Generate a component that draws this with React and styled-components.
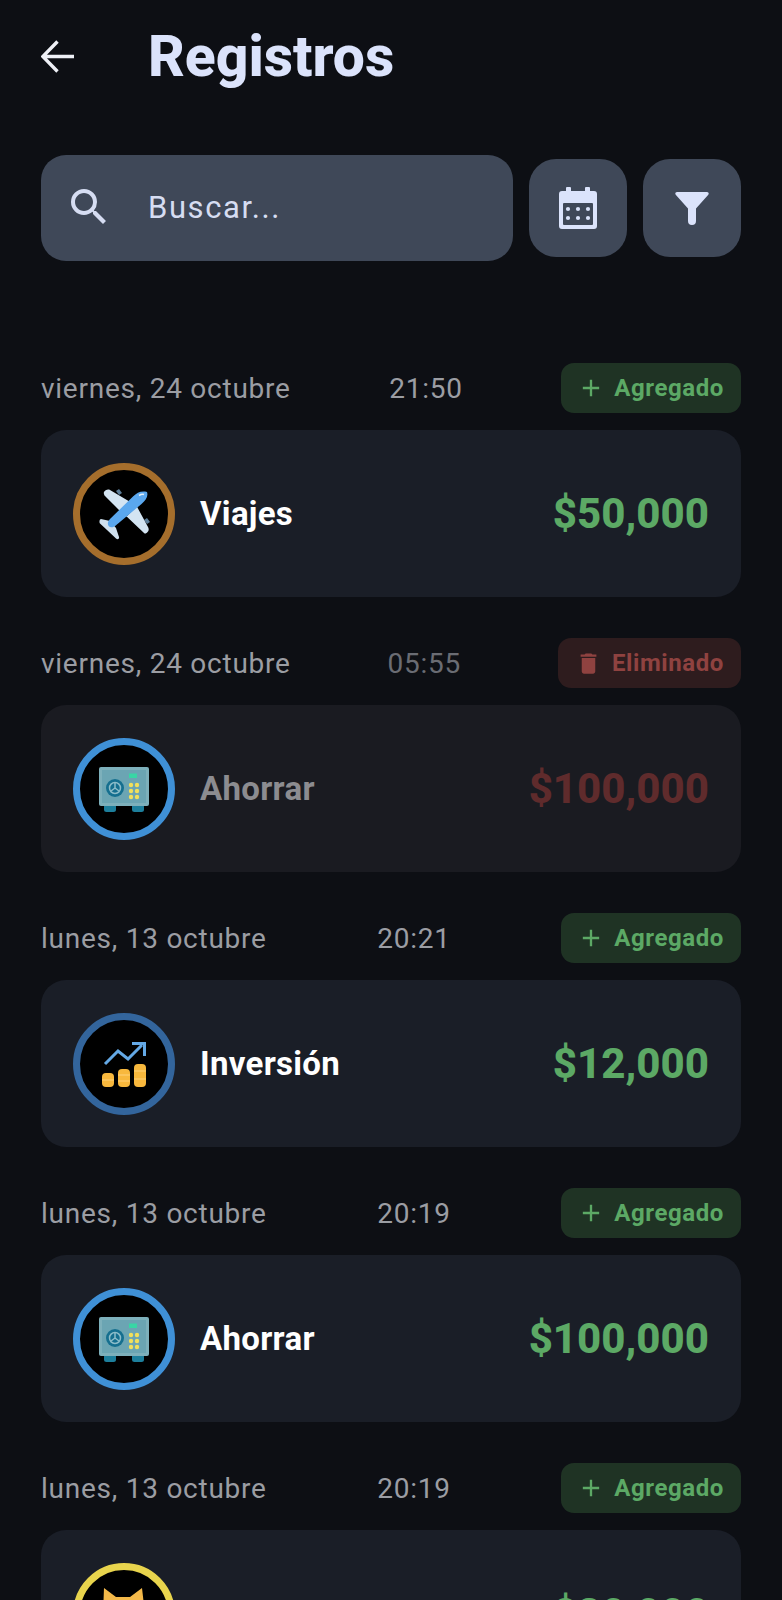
import React from 'react';
import styled, { createGlobalStyle } from 'styled-components';
import { MdAdd, MdDelete, MdSearch } from 'react-icons/md';

const GlobalStyle = createGlobalStyle`
  html, body {
    margin: 0;
    padding: 0;
    background: #0d0f14;
  }
  * {
    box-sizing: border-box;
  }
`;

const Page = styled.div`
  height: 1600px;
  overflow: hidden;
  padding: 0 41px;
  background: #0d0f14;
  font-family: Roboto, "Liberation Sans", sans-serif;
`;

const Header = styled.header`
  display: flex;
  align-items: center;
  height: 112px;
`;

const BackButton = styled.div`
  display: flex;
  width: 107px;
  color: #eef0f6;
`;

const Title = styled.h1`
  margin: 0;
  color: #dbe3fb;
  font-size: 57px;
  font-weight: 800;
  letter-spacing: 0;
`;

const SearchRow = styled.div`
  display: flex;
  align-items: center;
  gap: 16px;
  margin-top: 43px;
`;

const SearchBox = styled.div`
  display: flex;
  flex: 1;
  align-items: center;
  gap: 35px;
  height: 106px;
  padding: 0 24px 2px;
  border-radius: 25px;
  background: #3f4858;
  color: #d6ddf2;
  font-size: 31px;
  letter-spacing: 1.6px;
`;

const SquareButton = styled.div`
  display: flex;
  align-items: center;
  justify-content: center;
  width: 98px;
  height: 98px;
  border-radius: 27px;
  background: #3f4858;
`;

const List = styled.div`
  display: flex;
  flex-direction: column;
  gap: 41px;
  margin-top: 102px;
  width: 700px;
`;

const Entry = styled.section`
  display: flex;
  flex-direction: column;
  gap: 17px;
`;

const MetaRow = styled.div`
  display: flex;
  align-items: center;
  justify-content: space-between;
  height: 50px;
  color: #9b9da3;
  font-size: 28px;
  letter-spacing: 0.75px;
`;

const Time = styled.span`
  color: ${p => (p.$deleted ? '#6a6c73' : '#9b9da3')};
`;

const Badge = styled.div`
  display: flex;
  align-items: center;
  gap: ${p => (p.$deleted ? '10px' : '9px')};
  height: 50px;
  padding: 0 17px 0 ${p => (p.$deleted ? '17px' : '16px')};
  border-radius: 13px;
  background: ${p => (p.$deleted ? '#2e1c1e' : '#1f3324')};
  color: ${p => (p.$deleted ? '#8f4240' : '#5ca965')};
  font-size: 24px;
  font-weight: 700;
  letter-spacing: 0.6px;
`;

const Card = styled.div`
  display: flex;
  align-items: center;
  height: 167px;
  padding: 0 32px;
  border-radius: 25px;
  background: ${p => (p.$deleted ? '#1a1b21' : '#1a1e27')};
`;

const Avatar = styled.div`
  display: flex;
  align-items: center;
  justify-content: center;
  flex-shrink: 0;
  width: 102px;
  height: 102px;
  margin-right: 25px;
  border: 7px solid ${p => p.$ring};
  border-radius: 50%;
  background: #000;
`;

const Name = styled.span`
  flex: 1;
  color: ${p => (p.$deleted ? '#8c8c90' : '#fff')};
  font-size: 33px;
  font-weight: 700;
  letter-spacing: 0.3px;
`;

const Amount = styled.span`
  color: ${p => (p.$deleted ? '#5f2b2c' : '#5ca965')};
  font-size: 42px;
  font-weight: 800;
`;

const ArrowBack = () => (
  <svg width="33" height="33" viewBox="0 0 33 33" fill="none" stroke="currentColor" strokeWidth="3.4">
    <path d="M33 16.500H2M16.500 1.500 1.800 16.500 16.500 31.500" />
  </svg>
);

const CalendarIcon = () => (
  <svg width="38" height="42" viewBox="0 0 38 42" fill="#dbe3fb">
    <path d="M8 0h3a1 1 0 0 1 1 1v3h14V1a1 1 0 0 1 1-1h3a1 1 0 0 1 1 1v3h4a3 3 0 0 1 3 3v32a3 3 0 0 1-3 3H3a3 3 0 0 1-3-3V7a3 3 0 0 1 3-3h4V1a1 1 0 0 1 1-1z" />
    <rect x="4" y="16" width="30" height="22" rx="1" fill="#3f4858" />
    {[9, 19, 29].map(x =>
      [22, 31].map(y => <circle key={`${x}-${y}`} cx={x} cy={y} r="2.100" />)
    )}
  </svg>
);

const FunnelIcon = () => (
  <svg width="34" height="33" viewBox="0 0 34 33" fill="#dbe3fb">
    <path d="M2 0h30c1.500 0 2.200 1.500 1.300 2.700L21 16.500V29a4 4 0 0 1-8 0V16.500L.7 2.700C-.2 1.500.5 0 2 0z" />
  </svg>
);

const PlaneArt = () => (
  <svg width="88" height="88" viewBox="0 0 88 88">
    <path d="M36 21l3-2 3 4-3 2zM64 50l3-2 3 4-3 2z" fill="#5b7d99" />
    <path d="M24 22c1-2 4-3 6-2l27 16-11 11-21-21c-1-1-1.500-3-1-4zM67.500 62c1.500-1 1.500-3 .5-5L55 33 44 44l20 19c1 1 2.500.5 3.500-1z" fill="#d3e4f2" />
    <path d="M21 49l9 2 6 7 3 9c.5 2-1.500 3-3 1.500L27 60l-7-6.500C19 52 19.500 49 21 49z" fill="#cfe0ee" />
    <path d="M67 22c-5.500-1.500-10 .5-14 4.500L30 49c-2.500 2.500-2.700 5.500-1.200 7.200s4.700 1.500 7.200-1L61.500 34c4-3.800 7-7 5.500-12z" fill="#5aa7ee" />
    <path d="M59 25.500c2-1.300 4-1.500 5-1" stroke="#e6f0f8" strokeWidth="1.500" fill="none" />
  </svg>
);

const SafeArt = () => (
  <svg width="88" height="88" viewBox="0 0 88 88">
    <rect x="24" y="59" width="12" height="8" rx="2.500" fill="#1d7f9c" />
    <rect x="52" y="59" width="12" height="8" rx="2.500" fill="#1d7f9c" />
    <rect x="19" y="22" width="50" height="39" rx="2" fill="#7db0bb" />
    <rect x="22" y="25" width="44" height="33" fill="#6ba5b3" />
    <circle cx="35" cy="43" r="9" fill="#156f8f" />
    <circle cx="35" cy="43" r="5.500" fill="none" stroke="#8bbcc9" strokeWidth="1.500" />
    <path d="M35 43v-5M35 43l-4 3M35 43l4 3" stroke="#8bbcc9" strokeWidth="1.500" />
    <rect x="49" y="28.500" width="8" height="4.500" fill="#39d6a5" />
    {[51, 57].map(x =>
      [40, 46, 52].map(y => <circle key={`${x}-${y}`} cx={x} cy={y} r="2.200" fill="#f2e05a" />)
    )}
  </svg>
);

const GrowthArt = () => (
  <svg width="88" height="88" viewBox="0 0 88 88">
    <path d="M25 44l13-13 10 8 14-14" fill="none" stroke="#64a9e6" strokeWidth="3" />
    <path d="M52 23.500h12.500V36" fill="none" stroke="#64a9e6" strokeWidth="3" />
    <rect x="22" y="53" width="12" height="14" rx="4" fill="#f8b83d" />
    <rect x="38" y="49" width="12" height="18" rx="4" fill="#f8b83d" />
    <rect x="54" y="44" width="12" height="23" rx="4" fill="#f8b83d" />
    <path d="M22 60h12M38 55h12M38 61h12M54 51h12M54 59h12" stroke="#ffd27a" strokeWidth="1.200" />
  </svg>
);

const CatArt = () => (
  <svg width="88" height="88" viewBox="0 0 88 88">
    <path d="M24 18l12 9h14l12-9 3 26c0 13-10 22-21 22s-21-9-21-22z" fill="#f4b94a" />
    <circle cx="35" cy="42" r="3" fill="#5a3a10" />
    <circle cx="51" cy="42" r="3" fill="#5a3a10" />
  </svg>
);

const ENTRIES = [
  { date: 'viernes, 24 octubre', time: '21:50', name: 'Viajes', amount: '$50,000', ring: '#a56e2c', Art: PlaneArt },
  { date: 'viernes, 24 octubre', time: '05:55', name: 'Ahorrar', amount: '$100,000', ring: '#3f90d6', Art: SafeArt, deleted: true },
  { date: 'lunes, 13 octubre', time: '20:21', name: 'Inversión', amount: '$12,000', ring: '#33659c', Art: GrowthArt },
  { date: 'lunes, 13 octubre', time: '20:19', name: 'Ahorrar', amount: '$100,000', ring: '#3f90d6', Art: SafeArt },
  { date: 'lunes, 13 octubre', time: '20:19', name: 'Mascotas', amount: '$20,000', ring: '#e8d44d', Art: CatArt },
];

const App = () => (
  <Page>
    <GlobalStyle />
    <Header>
      <BackButton>
        <ArrowBack />
      </BackButton>
      <Title>Registros</Title>
    </Header>
    <SearchRow>
      <SearchBox>
        <MdSearch size={48} />
        Buscar...
      </SearchBox>
      <SquareButton>
        <CalendarIcon />
      </SquareButton>
      <SquareButton>
        <FunnelIcon />
      </SquareButton>
    </SearchRow>
    <List>
      {ENTRIES.map(({ date, time, name, amount, ring, Art, deleted }, i) => (
        <Entry key={i}>
          <MetaRow>
            <span>{date}</span>
            <Time $deleted={deleted}>{time}</Time>
            <Badge $deleted={deleted}>
              {deleted ? <MdDelete size={27} /> : <MdAdd size={28} />}
              {deleted ? 'Eliminado' : 'Agregado'}
            </Badge>
          </MetaRow>
          <Card $deleted={deleted}>
            <Avatar $ring={ring}>
              <Art />
            </Avatar>
            <Name $deleted={deleted}>{name}</Name>
            <Amount $deleted={deleted}>{amount}</Amount>
          </Card>
        </Entry>
      ))}
    </List>
  </Page>
);

export default App;
